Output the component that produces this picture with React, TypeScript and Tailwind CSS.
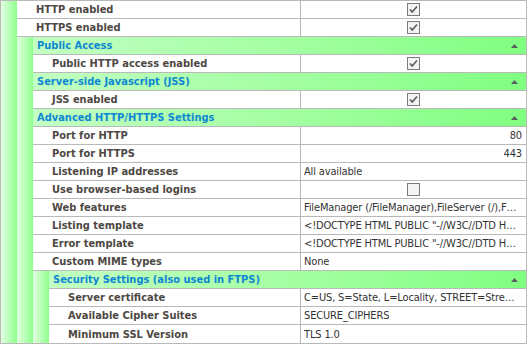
import React from "react";

type Row =
  | { kind: "header"; depth: number; label: string }
  | { kind: "item"; depth: number; label: string; value?: string; check?: boolean; align?: "right" };

const rows: Row[] = [
  { kind: "item", depth: 1, label: "HTTP enabled", check: true },
  { kind: "item", depth: 1, label: "HTTPS enabled", check: true },
  { kind: "header", depth: 2, label: "Public Access" },
  { kind: "item", depth: 2, label: "Public HTTP access enabled", check: true },
  { kind: "header", depth: 2, label: "Server-side Javascript (JSS)" },
  { kind: "item", depth: 2, label: "JSS enabled", check: true },
  { kind: "header", depth: 2, label: "Advanced HTTP/HTTPS Settings" },
  { kind: "item", depth: 2, label: "Port for HTTP", value: "80", align: "right" },
  { kind: "item", depth: 2, label: "Port for HTTPS", value: "443", align: "right" },
  { kind: "item", depth: 2, label: "Listening IP addresses", value: "All available" },
  { kind: "item", depth: 2, label: "Use browser-based logins", check: false },
  { kind: "item", depth: 2, label: "Web features", value: "FileManager (/FileManager),FileServer (/),F\u2026" },
  { kind: "item", depth: 2, label: "Listing template", value: '<!DOCTYPE HTML PUBLIC "-//W3C//DTD H\u2026' },
  { kind: "item", depth: 2, label: "Error template", value: '<!DOCTYPE HTML PUBLIC "-//W3C//DTD H\u2026' },
  { kind: "item", depth: 2, label: "Custom MIME types", value: "None" },
  { kind: "header", depth: 3, label: "Security Settings (also used in FTPS)" },
  { kind: "item", depth: 3, label: "Server certificate", value: "C=US, S=State, L=Locality, STREET=Stre\u2026" },
  { kind: "item", depth: 3, label: "Available Cipher Suites", value: "SECURE_CIPHERS" },
  { kind: "item", depth: 3, label: "Minimum SSL Version", value: "TLS 1.0" },
];

const nameWidths: Record<number, string> = {
  1: "w-[284px]",
  2: "w-[268px]",
  3: "w-[252px]",
};

const Strips = ({ depth }: { depth: number }) => (
  <>
    {Array.from({ length: depth }).map((_, i) => (
      <div
        key={i}
        className="w-4 h-[18px] shrink-0 bg-gradient-to-r from-[#e2ffe2] to-[#8cff8c]"
      />
    ))}
  </>
);

const Checkbox = ({ checked }: { checked: boolean }) => (
  <svg width="13" height="13" viewBox="0 0 13 13">
    <rect x="0.5" y="0.5" width="12" height="12" fill="#f3f3f3" stroke="#7c7c7c" />
    {checked && (
      <path d="M3 6.5 L5.2 9 L10 3.5" fill="none" stroke="#5c5c5c" strokeWidth="1.6" />
    )}
  </svg>
);

const App = () => {
  return (
    <div
      className="w-[527px] bg-white border border-[#b9b9b9] text-[11px] leading-[17px] overflow-hidden"
      style={{ fontFamily: '"DejaVu Sans Condensed", "DejaVu Sans", sans-serif' }}
    >
      {rows.map((row, idx) => {
        const last = idx === rows.length - 1;
        const line = last ? "" : "border-b border-[#b9b9b9]";
        if (row.kind === "header") {
          return (
            <div key={idx} className="flex">
              <Strips depth={row.depth} />
              <div
                className={`flex-1 min-w-0 h-[18px] flex items-center justify-between pl-1 pr-[8px] bg-gradient-to-r from-[#c2ffc2] to-[#80ff80] ${line}`}
              >
                <span className="font-bold text-[#0d88d2]">{row.label}</span>
                <svg width="7" height="4" viewBox="0 0 7 4">
                  <polygon points="3.5,0 7,4 0,4" fill="#5e5e5e" />
                </svg>
              </div>
            </div>
          );
        }
        return (
          <div key={idx} className="flex">
            <Strips depth={row.depth} />
            <div className={`flex-1 min-w-0 h-[18px] flex ${line}`}>
              <div
                className={`${nameWidths[row.depth]} shrink-0 flex items-center pl-[19px] border-r border-[#b9b9b9] font-bold text-[#4d4843]`}
              >
                {row.label}
              </div>
              <div
                className={`flex-1 min-w-0 flex items-center pl-[3px] text-[#333] tracking-[-0.15px] ${
                  row.check !== undefined
                    ? "justify-center pr-[3px]"
                    : row.align === "right"
                    ? "justify-end pr-[4px]"
                    : "pr-[2px]"
                }`}
              >
                {row.check !== undefined ? (
                  <Checkbox checked={row.check} />
                ) : (
                  <span className="block min-w-0 truncate">{row.value}</span>
                )}
              </div>
            </div>
          </div>
        );
      })}
    </div>
  );
};

export default App;
